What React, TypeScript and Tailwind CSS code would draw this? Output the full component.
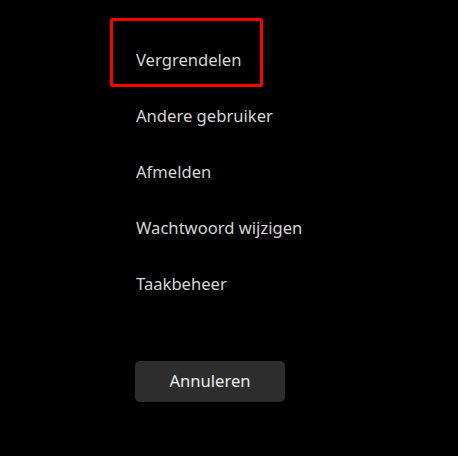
const items = [
  "Vergrendelen",
  "Andere gebruiker",
  "Afmelden",
  "Wachtwoord wijzigen",
  "Taakbeheer",
];

export default function App() {
  return (
    <div
      className="w-[458px] h-[456px] bg-black overflow-hidden"
      style={{ fontFamily: '"Noto Sans", "Open Sans", sans-serif' }}
    >
      <div className="pl-[136px] pt-[32px]">
        <ul className="flex flex-col">
          {items.map((item, index) => (
            <li key={item} className="relative h-[56px] flex items-center">
              {index === 0 && (
                <span className="absolute left-[-26px] top-[-14px] w-[153px] h-[69px] border-[3px] border-[#ff0000] rounded-[2px]" />
              )}
              <span className="text-[16.6px] text-[#d4d4d4]">{item}</span>
            </li>
          ))}
        </ul>
        <button className="mt-[49px] ml-[-1px] w-[150px] h-[41px] rounded-[5px] bg-[#2d2d2d] text-[16.6px] text-[#ebebeb]">
          Annuleren
        </button>
      </div>
    </div>
  );
}
